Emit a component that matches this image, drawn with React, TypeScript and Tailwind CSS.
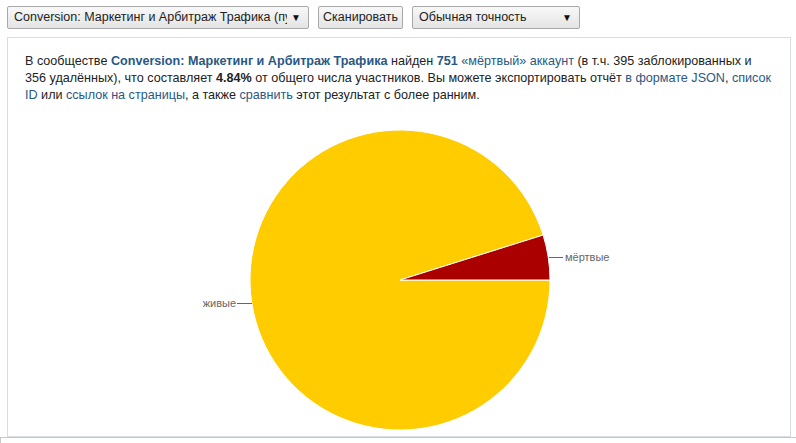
import React from 'react';

const FONT = "font-['Liberation_Sans',Arial,sans-serif]";

function Select({ label, width }: { label: string; width: string }) {
  return (
    <div
      className={`${width} h-[23px] flex items-center justify-between pl-[6px] pr-[7px] rounded-[2px] border border-[#a9a9a9] bg-gradient-to-b from-[#f8f8f8] to-[#e4e4e4] text-[12.5px] text-[#222] whitespace-nowrap`}
    >
      <span className="overflow-hidden min-w-0 flex-1">{label}</span>
      <span className="text-[10px] ml-[4px] text-[#111] shrink-0">▼</span>
    </div>
  );
}

// pie geometry: 4.84% dead
const CX = 392;
const CY = 176;
const R = 150;
const deadAngle = (4.84 / 100) * Math.PI * 2;
const px = CX + R * Math.cos(deadAngle);
const py = CY - R * Math.sin(deadAngle);

function Pie() {
  return (
    <svg width="782" height="330" className="block">
      <path
        d={`M ${CX} ${CY} L ${px} ${py} A ${R} ${R} 0 1 0 ${CX + R} ${CY} Z`}
        fill="#ffcc00"
        stroke="#fff"
        strokeWidth="1"
      />
      <path
        d={`M ${CX} ${CY} L ${CX + R} ${CY} A ${R} ${R} 0 0 0 ${px} ${py} Z`}
        fill="#aa0000"
        stroke="#fff"
        strokeWidth="1"
      />
      <line x1="541" y1="153.5" x2="555" y2="153.5" stroke="#666" strokeWidth="1" />
      <text x="557" y="157" fontSize="11" fill="#666" fontFamily="Arial, 'Liberation Sans', sans-serif">
        мёртвые
      </text>
      <line x1="229" y1="199.5" x2="244" y2="199.5" stroke="#666" strokeWidth="1" />
      <text x="228" y="203" fontSize="11" fill="#666" textAnchor="end" fontFamily="Arial, 'Liberation Sans', sans-serif">
        живые
      </text>
    </svg>
  );
}

export default function App() {
  const link = 'text-[#2a5885]';
  return (
    <div className={`${FONT} w-[796px] h-[443px] bg-white overflow-hidden text-black`}>
      {/* Controls */}
      <div className="flex gap-[9px] pl-[7px] pt-[6px]">
        <Select label="Conversion: Маркетинг и Арбитраж Трафика (публичная страница)" width="w-[302px]" />
        <div className="w-[85px] h-[23px] flex items-center justify-center rounded-[2px] border border-[#a9a9a9] bg-gradient-to-b from-[#f8f8f8] to-[#e4e4e4] text-[12.5px] text-[#222]">
          Сканировать
        </div>
        <Select label="Обычная точность" width="w-[168px]" />
      </div>

      {/* Result panel */}
      <div className="ml-[7px] mt-[8px] w-[784px] h-[400px] border border-[#d7dce5] bg-white">
        <div className="pl-[17px] pr-[10px] pt-[15px] text-[12.6px] leading-[17px] text-[#222] whitespace-nowrap">
          В сообществе <b className={link}>Conversion: Маркетинг и Арбитраж Трафика</b> найден{' '}
          <b className={link}>751</b> <span className={link}>«мёртвый» аккаунт</span> (в т.ч. 395 заблокированных и
          <br />
          356 удалённых), что составляет <b>4.84%</b> от общего числа участников. Вы можете экспортировать отчёт{' '}
          <span className={link}>в формате JSON</span>, <span className={link}>список</span>
          <br />
          <span className={link}>ID</span> или <span className={link}>ссылок на страницы</span>, а также{' '}
          <span className={link}>сравнить</span> этот результат с более ранним.
        </div>
        <Pie />
      </div>

      {/* Next block */}
      <div className="h-[10px] border-t border-l border-[#c8c8c8]" />
    </div>
  );
}
